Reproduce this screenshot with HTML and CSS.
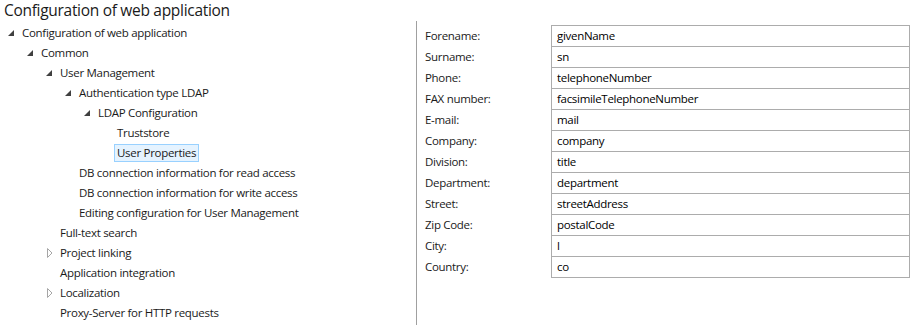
FILE: index.html
```html
<!DOCTYPE html>
<html lang="en">
<head>
    <meta charset="UTF-8">
    <title>Configuration of web application</title>
    <link rel="stylesheet" href="styles.css">
</head>
<body>

    <h1 class="title">Configuration of web application</h1>

    <div class="main">
        <!-- Tree on the left -->
        <div class="tree">
            <div class="node lvl0"><span class="toggle open"><svg width="6" height="6"><polygon points="6,0 6,6 0,6"/></svg></span><span class="label">Configuration of web application</span></div>
            <div class="node lvl1"><span class="toggle open"><svg width="6" height="6"><polygon points="6,0 6,6 0,6"/></svg></span><span class="label">Common</span></div>
            <div class="node lvl2"><span class="toggle open"><svg width="6" height="6"><polygon points="6,0 6,6 0,6"/></svg></span><span class="label">User Management</span></div>
            <div class="node lvl3"><span class="toggle open"><svg width="6" height="6"><polygon points="6,0 6,6 0,6"/></svg></span><span class="label">Authentication type LDAP</span></div>
            <div class="node lvl4"><span class="toggle open"><svg width="6" height="6"><polygon points="6,0 6,6 0,6"/></svg></span><span class="label">LDAP Configuration</span></div>
            <div class="node lvl5"><span class="toggle"></span><span class="label">Truststore</span></div>
            <div class="node lvl5"><span class="toggle"></span><span class="label selected">User Properties</span></div>
            <div class="node lvl3"><span class="toggle"></span><span class="label">DB connection information for read access</span></div>
            <div class="node lvl3"><span class="toggle"></span><span class="label">DB connection information for write access</span></div>
            <div class="node lvl3"><span class="toggle"></span><span class="label">Editing configuration for User Management</span></div>
            <div class="node lvl2"><span class="toggle"></span><span class="label">Full-text search</span></div>
            <div class="node lvl2"><span class="toggle closed"><svg width="6" height="10"><polygon points="0.5,0.5 5,5 0.5,9.5"/></svg></span><span class="label">Project linking</span></div>
            <div class="node lvl2"><span class="toggle"></span><span class="label">Application integration</span></div>
            <div class="node lvl2"><span class="toggle closed"><svg width="6" height="10"><polygon points="0.5,0.5 5,5 0.5,9.5"/></svg></span><span class="label">Localization</span></div>
            <div class="node lvl2"><span class="toggle"></span><span class="label">Proxy-Server for HTTP requests</span></div>
        </div>

        <!-- User properties on the right -->
        <div class="props">
            <div class="row"><span class="key">Forename:</span><span class="value">givenName</span></div>
            <div class="row"><span class="key">Surname:</span><span class="value">sn</span></div>
            <div class="row"><span class="key">Phone:</span><span class="value">telephoneNumber</span></div>
            <div class="row"><span class="key">FAX number:</span><span class="value">facsimileTelephoneNumber</span></div>
            <div class="row"><span class="key">E-mail:</span><span class="value">mail</span></div>
            <div class="row"><span class="key">Company:</span><span class="value">company</span></div>
            <div class="row"><span class="key">Division:</span><span class="value">title</span></div>
            <div class="row"><span class="key">Department:</span><span class="value">department</span></div>
            <div class="row"><span class="key">Street:</span><span class="value">streetAddress</span></div>
            <div class="row"><span class="key">Zip Code:</span><span class="value">postalCode</span></div>
            <div class="row"><span class="key">City:</span><span class="value">l</span></div>
            <div class="row"><span class="key">Country:</span><span class="value">co</span></div>
        </div>
    </div>

</body>
</html>
```

FILE: styles.css
```css
/* Side og skrift */
body {
    margin: 0;
    font-family: 'Open Sans', 'Noto Sans', sans-serif;
    font-size: 11.5px;
    letter-spacing: -0.3px;
    color: #1a1a1a;
    background: #fff;
}

.title {
    margin: 0;
    padding-left: 4px;
    height: 21px;
    line-height: 21px;
    font-size: 15.5px;
    font-weight: 400;
    letter-spacing: -0.3px;
    color: #1a1a1a;
}

.main {
    display: flex;
    height: 304px;
}

/* Trae */
.tree {
    width: 416px;
    padding-top: 2px;
    box-sizing: border-box;
}

.node {
    display: flex;
    align-items: center;
    height: 20px;
    white-space: nowrap;
}

.lvl0 { padding-left: 5px; }
.lvl1 { padding-left: 24px; }
.lvl2 { padding-left: 43px; }
.lvl3 { padding-left: 62px; }
.lvl4 { padding-left: 81px; }
.lvl5 { padding-left: 100px; }

.toggle {
    width: 17px;
    display: flex;
    align-items: center;
    flex-shrink: 0;
}

.toggle svg {
    display: block;
    margin-left: 3px;
}

.toggle.open polygon {
    fill: #404040;
}

.toggle.closed svg {
    margin-left: 4px;
}

.toggle.closed polygon {
    fill: none;
    stroke: #a6a6a6;
    stroke-width: 1;
}

.label {
    line-height: 16px;
}

.label.selected {
    margin-left: -3px;
    padding: 0 2px;
    border: 1px solid #99d1ff;
    background-color: #e5f3ff;
}

/* Egenskaber */
.props {
    flex: 1;
    border-left: 1px solid #a0a0a0;
    padding: 4px 3px 0 8px;
}

.row {
    display: flex;
    height: 22px;
    margin-top: -1px;
}

.row:first-child {
    margin-top: 0;
}

.key {
    width: 126px;
    flex-shrink: 0;
    line-height: 22px;
}

.value {
    flex: 1;
    border: 1px solid #acacac;
    padding-left: 5px;
    line-height: 20px;
    color: #000;
}
```
